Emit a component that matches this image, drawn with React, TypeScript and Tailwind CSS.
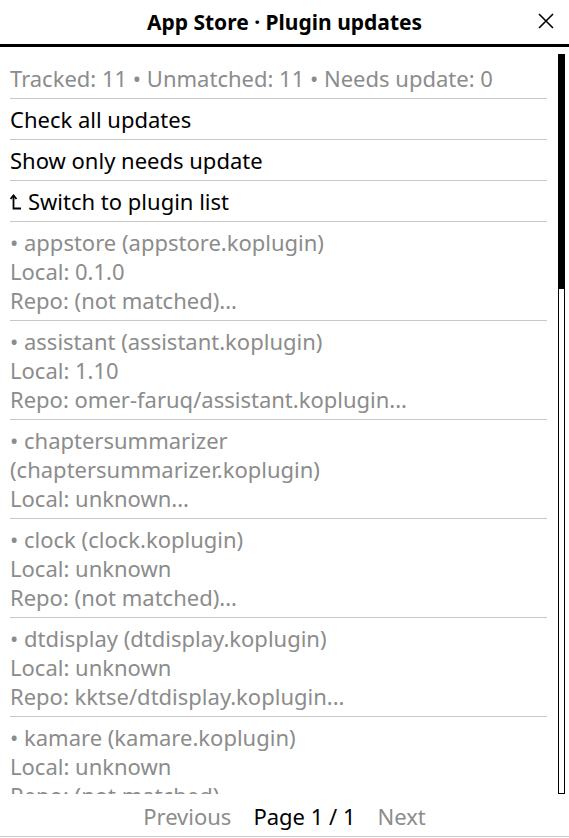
import React from 'react';

const font = { fontFamily: '"Noto Sans", "Open Sans", sans-serif' };

const plugins: string[][] = [
  ['• appstore (appstore.koplugin)', 'Local: 0.1.0', 'Repo: (not matched)...'],
  ['• assistant (assistant.koplugin)', 'Local: 1.10', 'Repo: omer-faruq/assistant.koplugin...'],
  ['• chaptersummarizer', '(chaptersummarizer.koplugin)', 'Local: unknown...'],
  ['• clock (clock.koplugin)', 'Local: unknown', 'Repo: (not matched)...'],
  ['• dtdisplay (dtdisplay.koplugin)', 'Local: unknown', 'Repo: kktse/dtdisplay.koplugin...'],
  ['• kamare (kamare.koplugin)', 'Local: unknown', 'Repo: (not matched)...'],
];

const UpIcon = () => (
  <svg width="12" height="16" viewBox="0 0 12 16" className="mr-[6px] shrink-0" fill="none" stroke="black" strokeWidth="1.8">
    <path d="M3.5 1.5 L3.5 14.5 L11 14.5" />
    <path d="M0.5 5 L3.5 1.5 L6.5 5" />
  </svg>
);

export default function App() {
  return (
    <div className="w-[569px] h-[838px] bg-white text-black overflow-hidden flex flex-col" style={font}>
      {/* title bar */}
      <div className="relative h-[44px] flex items-center justify-center shrink-0">
        <span className="text-[21px] font-bold leading-none">App Store · Plugin updates</span>
        <button className="absolute right-[15px] top-[13px] w-[16px] h-[16px]">
          <svg viewBox="0 0 16 16" width="16" height="16" stroke="black" strokeWidth="1.6" fill="none">
            <path d="M1 1 L15 15 M15 1 L1 15" />
          </svg>
        </button>
      </div>
      <div className="h-[3px] bg-black shrink-0" />

      {/* body */}
      <div className="flex mt-[7px] h-[740px] shrink-0">
        <div className="ml-[10px] w-[537px] pt-[4px] overflow-hidden text-[22px]">
          <div className="pt-[6px] pb-[5px] leading-[29px] border-b border-[#c8c8c8] text-[#8c8c8c]">
            Tracked: 11 • Unmatched: 11 • Needs update: 0
          </div>
          <div className="pt-[6px] pb-[5px] leading-[29px] border-b border-[#c8c8c8]">Check all updates</div>
          <div className="pt-[6px] pb-[5px] leading-[29px] border-b border-[#c8c8c8]">Show only needs update</div>
          <div className="pt-[6px] pb-[5px] leading-[29px] border-b border-[#c8c8c8] flex items-center">
            <UpIcon />
            <span>Switch to plugin list</span>
          </div>
          {plugins.map((p, i) => (
            <div key={i} className="pt-[6px] pb-[5px] leading-[29px] border-b border-[#c8c8c8] text-[#8c8c8c]">
              {p.map((l, j) => (
                <div key={j} className="whitespace-nowrap">{l}</div>
              ))}
            </div>
          ))}
        </div>
        <div className="ml-[11px] w-[7px] h-[740px] border border-black flex flex-col">
          <div className="h-[234px] bg-black" />
        </div>
      </div>

      {/* footer */}
      <div className="h-[42px] pt-[3px] flex items-center justify-center gap-[22px] text-[22px] leading-[29px] shrink-0">
        <span className="text-[#8c8c8c]">Previous</span>
        <span>Page 1 / 1</span>
        <span className="text-[#8c8c8c]">Next</span>
      </div>
      <div className="h-[1px] bg-[#c8c8c8] shrink-0" />
    </div>
  );
}
